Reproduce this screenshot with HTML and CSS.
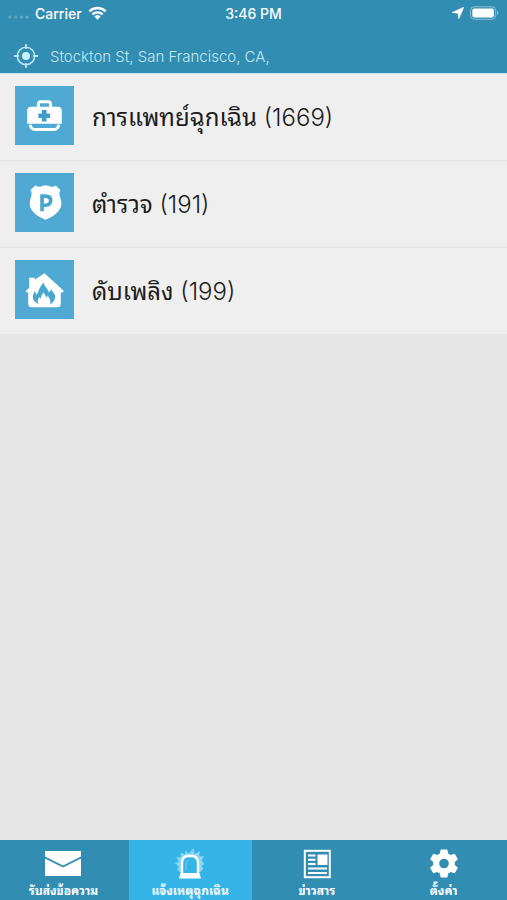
FILE: index.html
```html
<!DOCTYPE html>
<html lang="th">
<head>
<meta charset="utf-8">
<meta name="viewport" content="width=device-width, initial-scale=1">
<title>แจ้งเหตุฉุกเฉิน</title>
<link rel="stylesheet" href="styles.css">
</head>
<body>
<header class="header">
  <div class="status">
    <div class="status-left">
      <svg class="signal" viewBox="0 0 22 4" aria-hidden="true"><circle cx="2" cy="2" r="1.7"/><circle cx="8" cy="2" r="1.7"/><circle cx="14" cy="2" r="1.7"/><circle cx="20" cy="2" r="1.7"/></svg>
      <span>Carrier</span>
      <svg class="wifi" viewBox="0 0 20 14" aria-hidden="true"><path d="M1.5 5.2a12.3 12.3 0 0 1 17 0M4.6 8.5a7.8 7.8 0 0 1 10.8 0" fill="none" stroke="#fff" stroke-width="2.5"/><path d="M6.800 10.600a4.600 4.600 0 0 1 6.400 0L10 14z" fill="#fff"/></svg>
    </div>
    <time>3:46 PM</time>
    <div class="status-right">
      <svg class="arrow" viewBox="0 0 12 12" aria-hidden="true"><path d="M11.800.200 6.800 11.800 6 6.200.200 5.400z" fill="#fff" stroke="#fff" stroke-width=".6"/></svg>
      <svg class="battery" viewBox="0 0 30 14" aria-hidden="true"><rect x=".6" y=".6" width="26" height="12.800" rx="3.600" fill="none" stroke="#8fc3d9"/><rect x="2.400" y="2.300" width="22.400" height="9.400" rx="2" fill="#fff"/><path d="M28 5v4q1.400-.6 1.400-2T28 5" fill="#8fc3d9"/></svg>
    </div>
  </div>
  <div class="location">
    <svg class="target" viewBox="0 0 24 24" aria-hidden="true"><circle cx="12" cy="12" r="8.700" fill="none" stroke="#b9e6f5" stroke-width="1.600"/><circle cx="12" cy="12" r="4" fill="#c9f0fb"/><path d="M12 0v5M12 19v5M0 12h5M19 12h5" stroke="#b9e6f5" stroke-width="1.800"/></svg>
    <span>Stockton St, San Francisco, CA,</span>
  </div>
</header>

<main class="content">
  <ul class="list">
    <li><a class="row" href="tel:1669">
      <span class="tile"><svg viewBox="0 0 58 58" aria-hidden="true"><path d="M23 21v-3q0-2.500 2.500-2.500h7q2.500 0 2.500 2.500v3" fill="none" stroke="#fff" stroke-width="3"/><path d="M16 20.500h26q4 0 4 4V37H12V24.500q0-4 4-4z" fill="#fff"/><path d="M15 38q.5 4.800 5 4.800h18q4.500 0 5-4.800" fill="none" stroke="#fff" stroke-width="2.800"/><path d="M26.500 23.500h4.500v3.600h3.600v4.300H31V35h-4.500v-3.600H23v-4.300h3.500z" fill="#3f9dc8"/></svg></span>
      <span class="label">การแพทย์ฉุกเฉิน <span class="number">(1669)</span></span>
    </a></li>
    <li><a class="row" href="tel:191">
      <span class="tile"><svg viewBox="0 0 58 58" aria-hidden="true"><path d="M20 12.200q3.800 2.500 6.500.5L30 12l3.700.7q3 2 6.300-.5l4.700 4.600q-2 3.800-.3 7.200 2.500 6.500-.4 11.600Q40.800 41.400 30 46 19 41.400 16 35.600q-2.800-5.100-.4-11.600 1.700-3.400-.4-7.200z" fill="#fff"/><path d="M26.600 37.500V22.700h3.200q5.300 0 5.300 4.400 0 4.600-5.500 4.600h-3" fill="none" stroke="#4aa6d1" stroke-width="3.600"/></svg></span>
      <span class="label">ตำรวจ <span class="number">(191)</span></span>
    </a></li>
    <li><a class="row" href="tel:199">
      <span class="tile"><svg viewBox="0 0 58 58" aria-hidden="true"><path d="M14 24v-6.500h5.500v2L29 13l18.500 17q.8 1.500-1 2H45v11q0 3.500-3.500 3.500h-25Q13 46.500 13 43V32h-1.500q-1.500-.8-.5-2l3-2.700z" fill="#fff"/><path d="M23.500 43.500c-8-3.500-6.500-9-3.700-13l1.200 3.800c3-4.300 2.300-7.300 7.300-12.300.3 4.500 4.300 5.500 5.200 10.300l2-3.800c.8 3.500 5.500 4.700 3.700 9.700-.7 2.600-2.200 4.200-4.700 5.300 1.200-4.300-1.500-6.200-2.300-8.500l-1.300 2.200c-.3-2.200-2.200-2.700-2.400-5.200-2.800 2.500-2.500 4-3.500 6.200l-1.300-1.900c-1.200 3.200-2.300 4.400-.2 7.200z" fill="#4aa6d1"/></svg></span>
      <span class="label">ดับเพลิง <span class="number">(199)</span></span>
    </a></li>
  </ul>
</main>

<nav class="tabs">
  <a class="tab" href="#messages">
    <svg viewBox="0 0 38 32" aria-hidden="true"><path d="M1 4h36v5.500L19 18.500 1 9.500z" fill="#fff"/><path d="M1 11.500l18 9 18-9V29H1z" fill="#fff"/></svg>
    <span>รับส่งข้อความ</span>
  </a>
  <a class="tab active" href="#emergency" aria-current="page">
    <svg viewBox="0 0 38 32" aria-hidden="true"><path d="M9 25l-3-3 2-2-4-4 4-1-2.500-5 4.500.5L9.500 5.500 14 7.500l.5-4L18 6.500 22.500 1l1 6L29 4l-1 5.500 5-.5-2.500 4.500 3 3.500-3 2 2 3-3.500 3z" fill="#8bd6f3"/><path d="M11 27V16q0-7 6.500-7h3q6.500 0 6.500 7v11" fill="#35b4e7" stroke="#fff" stroke-width="2.400"/><path d="M15 23v-6.500q0-3 3-3" fill="none" stroke="#70cbee"/><path d="M9.500 26h19l1.500 5.500H8z" fill="#fff"/></svg>
    <span>แจ้งเหตุฉุกเฉิน</span>
  </a>
  <a class="tab" href="#news">
    <svg viewBox="0 0 38 32" aria-hidden="true"><rect x="6.800" y="3.800" width="25" height="26.400" fill="none" stroke="#fff" stroke-width="2"/><path d="M19.500 7.500h10v10.500h-10z" fill="#fff"/><path d="M10 8.500h7.500M10 12.700h7.500M10 16.900h7.500M10 21.500h19M10 26h19" stroke="#fff" stroke-width="2"/></svg>
    <span>ข่าวสาร</span>
  </a>
  <a class="tab" href="#settings">
    <svg viewBox="0 0 38 32" aria-hidden="true"><path d="M15.700 2.500h6.600l.9 4.100 2.500 1.400 4-1.300 3.200 5.600-3.100 2.800v2.800l3.100 2.800-3.200 5.600-4-1.300-2.500 1.400-.9 4.100h-6.600l-.9-4.100-2.500-1.400-4 1.300-3.200-5.600 3.100-2.800v-2.800l-3.100-2.800 3.200-5.600 4 1.300 2.500-1.400zM19 11.700a4.800 4.800 0 1 0 0 9.600 4.800 4.800 0 0 0 0-9.600z" fill="#fff" fill-rule="evenodd"/></svg>
    <span>ตั้งค่า</span>
  </a>
</nav>
</body>
</html>
```

FILE: styles.css
```css
* {
  box-sizing: border-box;
}

body {
  margin: 0;
  min-height: 100vh;
  display: flex;
  flex-direction: column;
  background: #e6e6e6;
  font-family: Inter, "Noto Sans Thai Looped", Loma, Garuda, Waree, Umpush, "Noto Sans", sans-serif;
}

a {
  color: inherit;
  text-decoration: none;
}

svg {
  display: block;
  flex: none;
}

.header {
  background: #318db1;
  color: #fff;
  padding-bottom: 5px;
  border-bottom: 1px solid #c5e4ef;
}

.status {
  display: grid;
  grid-template-columns: 1fr auto 1fr;
  align-items: center;
  height: 26px;
  padding: 0 8px;
  font-size: 14px;
  font-weight: 500;
}

.status-left,
.status-right {
  display: flex;
  align-items: center;
  gap: 6px;
}

.status-right {
  justify-content: flex-end;
}

.signal {
  width: 21px;
  height: 4px;
  margin-top: 8px;
  fill: #62a9c5;
}

.wifi {
  width: 19px;
  height: 14px;
}

.arrow {
  width: 12px;
  height: 12px;
}

.battery {
  width: 29px;
  height: 14px;
}

.location {
  display: flex;
  align-items: center;
  gap: 12px;
  height: 24px;
  margin-top: 18px;
  padding: 0 14px;
  color: #c4e9f5;
  font-size: 15px;
  font-weight: 300;
}

.target {
  width: 24px;
  height: 24px;
}

.content {
  flex: 1;
}

.list {
  margin: 0;
  padding: 0;
  list-style: none;
}

.row {
  display: flex;
  align-items: center;
  gap: 18px;
  padding: 12px 15px 15px;
  background: #efefef;
  border-bottom: 1px solid #e4e4e4;
  color: #1c1c1c;
}

.tile {
  flex: none;
  width: 59px;
  height: 59px;
  background: #4fa9d3;
}

.label {
  font-size: 24px;
  font-weight: 400;
  line-height: 36px;
  padding-top: 4px;
}

.number {
  font-weight: 300;
}

.tabs {
  display: grid;
  grid-template-columns: repeat(4, 1fr);
  background: #318db1;
  color: #fff;
}

.tab {
  display: flex;
  flex-direction: column;
  align-items: center;
  height: 60px;
  margin: 0 2px;
  padding-top: 7px;
  font-size: 12px;
  font-weight: 700;
  line-height: 24px;
  white-space: nowrap;
}

.tab svg {
  width: 38px;
  height: 32px;
}

.active {
  background: #34b4e7;
}
```
